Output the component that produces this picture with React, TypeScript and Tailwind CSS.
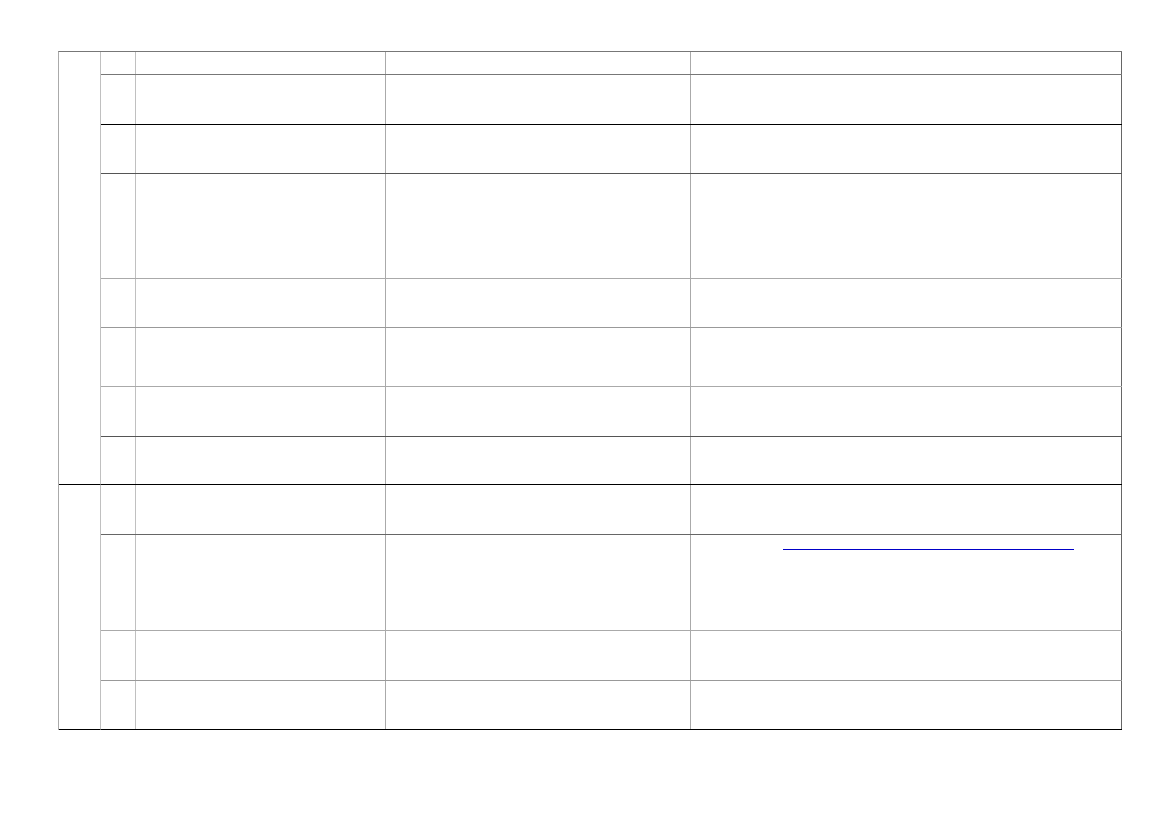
const cols = ["w-[35px]", "w-[250px]", "w-[305px]", "w-[431px]"];

type Row = { h: string; line: string };

const groupA: Row[] = [
  { h: "h-[23px]", line: "border-[#777777]" },
  { h: "h-[50px]", line: "border-black" },
  { h: "h-[49px]", line: "border-[#555555]" },
  { h: "h-[105px]", line: "border-[#aaaaaa]" },
  { h: "h-[49px]", line: "border-[#999999]" },
  { h: "h-[59px]", line: "border-[#aaaaaa]" },
  { h: "h-[50px]", line: "border-[#555555]" },
  { h: "h-[48px]", line: "border-black" },
];

const groupB: Row[] = [
  { h: "h-[50px]", line: "border-[#666666]" },
  { h: "h-[96px]", line: "border-[#aaaaaa]" },
  { h: "h-[50px]", line: "border-[#999999]" },
  { h: "h-[49px]", line: "border-black" },
];

function cellRight(i: number) {
  if (i === 0) return "border-r-[#c0c0c0]";
  if (i === 3) return "border-r-[#666666]";
  return "border-r-[#aaaaaa]";
}

function TableRow({ row, link }: { row: Row; link?: boolean }) {
  return (
    <div className={`flex ${row.h} border-b ${row.line}`}>
      {cols.map((w, i) => (
        <div key={i} className={`${w} shrink-0 border-r ${cellRight(i)}`}>
          {link && i === 3 && (
            <div className="ml-[92px] mt-[14px] w-[291px] border-b border-[#0000c8]" />
          )}
        </div>
      ))}
    </div>
  );
}

function Group({ rows, bottom, linkRow }: { rows: Row[]; bottom: string; linkRow?: number }) {
  return (
    <div className="flex">
      <div className={`w-[42px] shrink-0 border-r border-b border-r-[#c0c0c0] ${bottom}`} />
      <div className="flex flex-col">
        {rows.map((r, idx) => (
          <TableRow key={idx} row={r} link={idx === linkRow} />
        ))}
      </div>
    </div>
  );
}

export default function App() {
  return (
    <div className="min-h-screen w-full bg-white pt-[51px] pl-[58px]">
      <div className="w-[1064px] border-l border-t border-l-[#aaaaaa] border-t-[#777777]">
        <Group rows={groupA} bottom="border-b-black" />
        <Group rows={groupB} bottom="border-b-black" linkRow={1} />
      </div>
    </div>
  );
}
